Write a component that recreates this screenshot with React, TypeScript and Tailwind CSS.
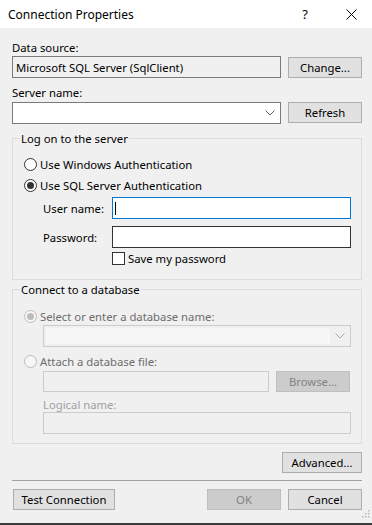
import React from 'react';

function Btn({ label, w, disabled }: { label: string; w: string; disabled?: boolean }) {
  return (
    <div
      className={`${w} h-[21px] flex items-center justify-center border ${
        disabled ? 'bg-[#cccccc] border-[#bfbfbf] text-[#838383]' : 'bg-[#e1e1e1] border-[#adadad] text-black'
      }`}
    >
      {label}
    </div>
  );
}

function Radio({ checked, disabled }: { checked?: boolean; disabled?: boolean }) {
  return (
    <div
      className={`w-[13px] h-[13px] rounded-full border flex items-center justify-center ${
        disabled ? 'border-[#bcbcbc] bg-[#f7f7f7]' : 'border-[#333333] bg-white'
      }`}
    >
      {checked && (
        <div className={`w-[7px] h-[7px] rounded-full ${disabled ? 'bg-[#bcbcbc]' : 'bg-[#333333]'}`} />
      )}
    </div>
  );
}

function Chevron({ color }: { color: string }) {
  return (
    <svg width="10" height="6" viewBox="0 0 10 6">
      <path d="M0.5 0.5 L5 5 L9.5 0.5" fill="none" stroke={color} strokeWidth="1" />
    </svg>
  );
}

export default function App() {
  return (
    <div className="w-[372px] h-[525px] flex flex-col bg-[#f0f0f0] text-[11.3px] leading-[15px] text-black font-['Noto_Sans',sans-serif] overflow-hidden">
      {/* title bar */}
      <div className="h-[28px] shrink-0 bg-white flex items-center pl-[8px] text-[12px]">
        <span className="flex-1">Connection Properties</span>
        <span className="text-[13px] mr-[38px]">?</span>
        <svg width="11" height="11" viewBox="0 0 11 11" className="mr-[15px]">
          <path d="M0.5 0.5 L10.5 10.5 M10.5 0.5 L0.5 10.5" stroke="#000" strokeWidth="1" />
        </svg>
      </div>

      <div className="flex flex-col pl-[12px] pr-[10px]">
        <div className="mt-[12px]">Data source:</div>
        <div className="mt-[1px] flex">
          <div className="w-[269px] h-[22px] border border-[#7a7a7a] flex items-center pl-[3px]">
            Microsoft SQL Server (SqlClient)
          </div>
          <div className="ml-[7px] mt-[1px]">
            <Btn label="Change..." w="w-[74px]" />
          </div>
        </div>

        <div className="mt-[7px]">Server name:</div>
        <div className="mt-[2px] flex">
          <div className="w-[269px] h-[22px] border border-[#7a7a7a] bg-white flex items-center justify-end pr-[5px]">
            <Chevron color="#606060" />
          </div>
          <div className="ml-[7px]">
            <Btn label="Refresh" w="w-[74px]" />
          </div>
        </div>

        {/* Log on group */}
        <fieldset className="mt-[7px] border border-[#dcdcdc] w-[350px] pb-[13px]">
          <legend className="ml-[7px] px-[1px]">Log on to the server</legend>
          <div className="pl-[11px] pt-[8px] flex flex-col">
            <div className="h-[21px] flex items-center gap-[3px]">
              <Radio />
              <span>Use Windows Authentication</span>
            </div>
            <div className="h-[21px] flex items-center gap-[3px]">
              <Radio checked />
              <span>Use SQL Server Authentication</span>
            </div>
            <div className="mt-[1px] flex items-center">
              <div className="w-[88px] pl-[19px]">User name:</div>
              <div className="w-[239px] h-[22px] border border-[#0078d7] bg-white flex items-center pl-[2px]">
                <div className="w-px h-[13px] bg-black" />
              </div>
            </div>
            <div className="mt-[7px] flex items-center">
              <div className="w-[88px] pl-[19px]">Password:</div>
              <div className="w-[239px] h-[22px] border border-[#333333] bg-white" />
            </div>
            <div className="mt-[3px] h-[15px] flex items-center pl-[88px] gap-[3px]">
              <div className="w-[13px] h-[13px] border border-[#333333] bg-white" />
              <span>Save my password</span>
            </div>
          </div>
        </fieldset>

        {/* Connect group */}
        <fieldset className="mt-[2px] border border-[#dcdcdc] w-[350px] pb-[9px]">
          <legend className="ml-[7px] px-[1px]">Connect to a database</legend>
          <div className="pl-[11px] pt-[10px] flex flex-col text-[#6d6d6d]">
            <div className="h-[18px] flex items-center gap-[3px]">
              <Radio checked disabled />
              <span>Select or enter a database name:</span>
            </div>
            <div className="ml-[19px] w-[308px] h-[22px] border border-[#cccccc] flex">
              <div className="flex-1 my-[2px] ml-[2px] bg-[#f7f7f7]" />
              <div className="w-[20px] flex items-center justify-center">
                <Chevron color="#a8a8a8" />
              </div>
            </div>
            <div className="mt-[5px] h-[18px] flex items-center gap-[3px]">
              <Radio disabled />
              <span>Attach a database file:</span>
            </div>
            <div className="mt-[1px] ml-[19px] flex">
              <div className="w-[226px] h-[21px] border border-[#cccccc]" />
              <div className="ml-[7px]">
                <Btn label="Browse..." w="w-[74px]" disabled />
              </div>
            </div>
            <div className="mt-[5px] ml-[19px] text-[#a0a0a0]">Logical name:</div>
            <div className="ml-[19px] w-[308px] h-[22px] border border-[#cccccc]" />
          </div>
        </fieldset>

        <div className="mt-[8px] flex justify-end">
          <Btn label="Advanced..." w="w-[80px]" />
        </div>

        <div className="mt-[7px] h-px bg-[#a0a0a0]" />

        <div className="mt-[8px] flex">
          <div className="ml-[1px]">
            <Btn label="Test Connection" w="w-[102px]" />
          </div>
          <div className="ml-auto">
            <Btn label="OK" w="w-[74px]" disabled />
          </div>
          <div className="ml-[7px]">
            <Btn label="Cancel" w="w-[74px]" />
          </div>
        </div>
      </div>

      <div className="flex-1 flex items-end justify-end pr-[2px] pb-[3px]">
        <svg width="10" height="10" viewBox="0 0 10 10">
          <rect x="8" y="0" width="1.5" height="1.5" fill="#b8b8b8" />
          <rect x="5" y="3" width="1.5" height="1.5" fill="#b8b8b8" />
          <rect x="8" y="3" width="1.5" height="1.5" fill="#b8b8b8" />
          <rect x="2" y="6" width="1.5" height="1.5" fill="#b8b8b8" />
          <rect x="5" y="6" width="1.5" height="1.5" fill="#b8b8b8" />
          <rect x="8" y="6" width="1.5" height="1.5" fill="#b8b8b8" />
        </svg>
      </div>
      <div className="h-[2px] shrink-0 bg-[#3c3c3c]" />
      <div className="h-[2px] shrink-0 bg-[#e8e8e8]" />
    </div>
  );
}
